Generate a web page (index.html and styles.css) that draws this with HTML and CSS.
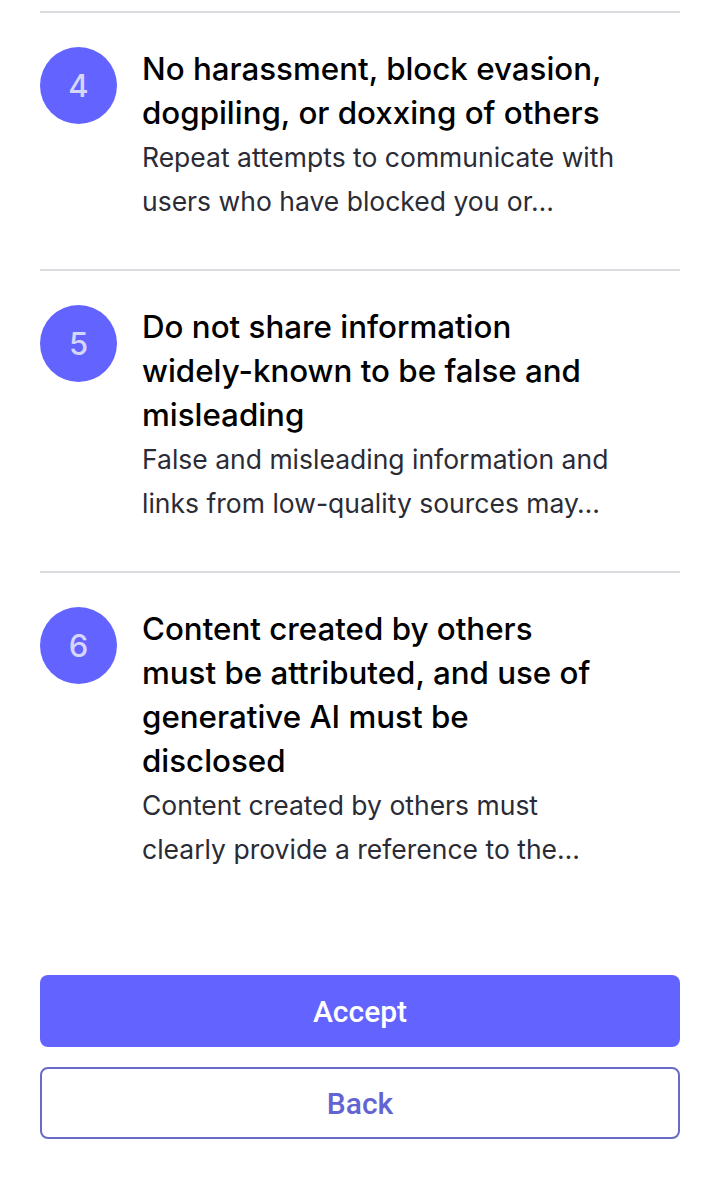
FILE: index.html
```html
<!DOCTYPE html>
<html lang="en">
<head>
<meta charset="utf-8">
<title>Rules</title>
<link rel="stylesheet" href="styles.css">
</head>
<body>
<main class="page">
  <ol class="rules">
    <li class="rule">
      <span class="rule-num">4</span>
      <div class="rule-body">
        <h2 class="rule-title">No harassment, block evasion,<br>dogpiling, or doxxing of others</h2>
        <p class="rule-desc">Repeat attempts to communicate with<br>users who have blocked you or…</p>
      </div>
    </li>
    <li class="rule">
      <span class="rule-num">5</span>
      <div class="rule-body">
        <h2 class="rule-title">Do not share information<br>widely-known to be false and<br>misleading</h2>
        <p class="rule-desc">False and misleading information and<br>links from low-quality sources may…</p>
      </div>
    </li>
    <li class="rule rule-last">
      <span class="rule-num">6</span>
      <div class="rule-body">
        <h2 class="rule-title">Content created by others<br>must be attributed, and use of<br>generative AI must be<br>disclosed</h2>
        <p class="rule-desc">Content created by others must<br>clearly provide a reference to the…</p>
      </div>
    </li>
  </ol>
  <div class="actions">
    <button class="btn btn-primary" type="button">Accept</button>
    <button class="btn btn-outline" type="button">Back</button>
  </div>
</main>
</body>
</html>
```

FILE: styles.css
```css
* {
  box-sizing: border-box;
}

html, body {
  margin: 0;
  padding: 0;
  background: #ffffff;
}

body {
  font-family: Inter, Roboto, "Noto Sans", sans-serif;
  color: #000000;
}

.page {
  padding: 11px 40px 56px;
}

.rules {
  list-style: none;
  margin: 0;
  padding: 0;
}

.rule {
  display: flex;
  align-items: flex-start;
  gap: 25px;
  border-top: 2px solid #dcdce0;
  padding: 34px 0 46px;
}

.rule-last {
  padding-bottom: 0;
}

.rule-num {
  flex: 0 0 77px;
  width: 77px;
  height: 77px;
  border-radius: 50%;
  background: #6364ff;
  color: #d6d6fa;
  display: flex;
  align-items: center;
  justify-content: center;
  font-family: Inter, Roboto, sans-serif;
  font-size: 31px;
  font-weight: 500;
}

.rule-body {
  flex: 1;
  min-width: 0;
}

.rule-title {
  margin: 0;
  font-size: 31.3px;
  font-weight: 500;
  line-height: 44px;
  color: #000000;
}

.rule-desc {
  margin: 0;
  font-size: 26.5px;
  font-weight: 400;
  line-height: 44px;
  color: #2b2b36;
}

.actions {
  display: flex;
  flex-direction: column;
  gap: 20px;
  margin-top: 104px;
}

.btn {
  display: flex;
  align-items: center;
  justify-content: center;
  width: 100%;
  height: 72px;
  border-radius: 8px;
  font-family: Roboto, "Noto Sans", "Liberation Sans", sans-serif;
  font-size: 30px;
  font-weight: 500;
  cursor: pointer;
}

.btn-primary {
  background: #6364ff;
  color: #ffffff;
  border: none;
}

.btn-outline {
  background: #ffffff;
  color: #6364d4;
  border: 2px solid #6a6ac8;
}
```
